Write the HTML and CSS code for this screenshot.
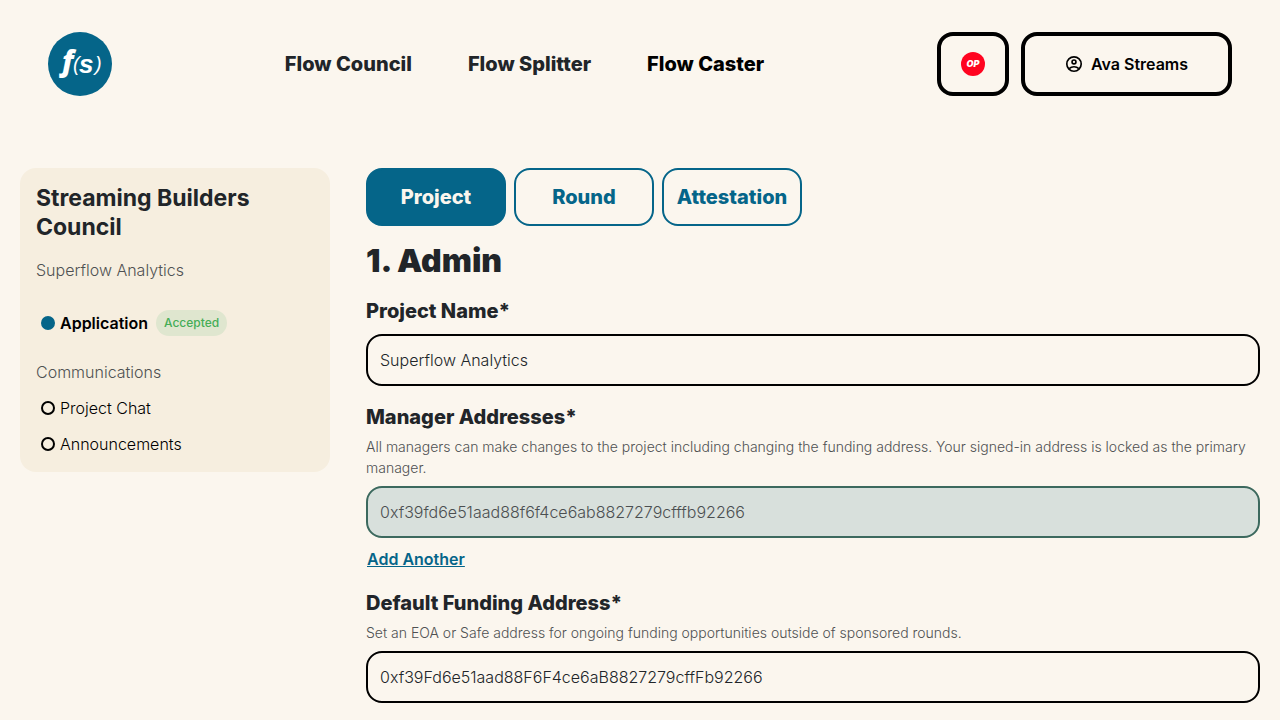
FILE: index.html
```html
<!DOCTYPE html>
<html lang="en">
  <head>
    <meta charset="UTF-8">
    <meta name="viewport" content="width=device-width, initial-scale=1">
    <title>Flow Council - Application</title>
    <link rel="stylesheet" href="styles.css">
  </head>
  <body>
    <header class="header">
      <a href="#" class="logo" aria-label="Flow State">
        <svg width="64" height="64" viewBox="0 0 64 64">
          <circle cx="32" cy="32" r="32" fill="#056589"/>
          <g fill="#fff" font-family="Liberation Sans, sans-serif" font-style="italic">
            <text x="14" y="39" font-family="Open Sans, sans-serif" font-size="28" font-weight="800">f</text>
            <text x="25" y="39" font-size="20">(</text>
            <text x="31" y="41" font-size="26" font-weight="700">s</text>
            <text x="47" y="39" font-size="20">)</text>
          </g>
        </svg>
      </a>
      <nav class="nav">
        <a href="#">Flow Council</a>
        <a href="#">Flow Splitter</a>
        <a href="#" class="active">Flow Caster</a>
      </nav>
      <div class="account">
        <button type="button" class="network-button" aria-label="Network">
          <svg width="24" height="24" viewBox="0 0 24 24">
            <circle cx="12" cy="12" r="12" fill="#ff0420"/>
            <text x="12" y="15" fill="#fff" font-family="Inter, sans-serif" font-size="9" font-weight="900" font-style="italic" text-anchor="middle">OP</text>
          </svg>
        </button>
        <button type="button" class="profile-button">
          <svg width="18" height="18" viewBox="0 0 24 24" fill="none" stroke="#000" stroke-width="2.2">
            <circle cx="12" cy="12" r="9.6"/>
            <circle cx="12" cy="9.3" r="2.6"/>
            <path d="M5.5 18.2c3.600-3.400 9.400-3.400 13 0"/>
          </svg>
          Ava Streams
        </button>
      </div>
    </header>

    <div class="page">
      <aside class="sidebar">
        <h2>Streaming Builders Council</h2>
        <p class="project">Superflow Analytics</p>
        <a href="#" class="step current"><span class="dot"></span>Application <span class="badge">Accepted</span></a>
        <p class="group">Communications</p>
        <a href="#" class="step"><span class="dot"></span>Project Chat</a>
        <a href="#" class="step"><span class="dot"></span>Announcements</a>
      </aside>

      <main class="content">
        <div class="tabs">
          <button type="button" class="tab active">Project</button>
          <button type="button" class="tab">Round</button>
          <button type="button" class="tab">Attestation</button>
        </div>

        <form>
          <h1>1. Admin</h1>

          <div class="field">
            <label for="project-name">Project Name*</label>
            <input type="text" id="project-name" value="Superflow Analytics">
          </div>

          <div class="field">
            <label for="manager-address">Manager Addresses*</label>
            <p class="hint">All managers can make changes to the project including changing the funding address. Your signed-in address is locked as the primary manager.</p>
            <input type="text" id="manager-address" value="0xf39fd6e51aad88f6f4ce6ab8827279cfffb92266" disabled>
            <button type="button" class="add-button">Add Another</button>
          </div>

          <div class="field">
            <label for="funding-address">Default Funding Address*</label>
            <p class="hint">Set an EOA or Safe address for ongoing funding opportunities outside of sponsored rounds.</p>
            <input type="text" id="funding-address" value="0xf39Fd6e51aad88F6F4ce6aB8827279cffFb92266">
          </div>
        </form>
      </main>
    </div>
  </body>
</html>
```
FILE: styles.css
```css
* {
  box-sizing: border-box;
}

body {
  margin: 0;
  background: #fbf6ee;
  color: #212529;
  font-family: Inter, sans-serif;
  font-size: 16px;
  font-weight: 300;
  line-height: 24px;
}

h1, h2, p {
  margin: 0;
}

a {
  color: inherit;
  text-decoration: none;
}

button, input {
  font: inherit;
}

button {
  cursor: pointer;
}

.header {
  display: flex;
  align-items: center;
  justify-content: space-between;
  padding: 32px 48px;
}

.logo svg {
  display: block;
}

.nav {
  display: flex;
  gap: 56px;
  font-size: 20px;
  font-weight: 800;
}

.nav .active {
  color: #000;
}

.account {
  display: flex;
  gap: 12px;
}

.account button {
  display: flex;
  align-items: center;
  justify-content: center;
  gap: 8px;
  height: 64px;
  padding: 0;
  border: 4px solid #000;
  border-radius: 16px;
  background: transparent;
  color: #000;
  font-weight: 600;
}

.account .network-button {
  width: 72px;
}

.account .profile-button {
  width: 211px;
}

.page {
  display: flex;
  align-items: flex-start;
  gap: 36px;
  padding: 40px 20px 16px;
}

.sidebar {
  flex: none;
  width: 310px;
  padding: 16px;
  border-radius: 16px;
  background: #f6eedf;
}

.sidebar h2 {
  font-size: 23px;
  font-weight: 700;
  line-height: 29px;
}

.project, .group {
  color: #4f5152;
}

.project {
  margin: 16px 0 28px;
}

.group {
  margin-top: 24px;
}

.step {
  display: flex;
  align-items: center;
  color: #000;
}

.step:not(.current) {
  margin-top: 12px;
}

.step.current {
  font-weight: 600;
}

.dot {
  width: 14px;
  height: 14px;
  margin: 0 5px;
  border: 2px solid #000;
  border-radius: 50%;
}

.current .dot {
  border-color: #056589;
  background: #056589;
}

.badge {
  margin-left: 8px;
  padding: 4px 8px;
  border-radius: 16px;
  background: #dfe6cf;
  color: #45ad57;
  font-size: 12px;
  font-weight: 500;
  line-height: 18px;
}

.content {
  flex: 1;
  min-width: 0;
}

.tabs {
  display: flex;
  gap: 8px;
}

.tab {
  width: 140px;
  height: 58px;
  padding: 0;
  border: 2px solid #056589;
  border-radius: 16px;
  background: transparent;
  color: #056589;
  font-size: 20px;
  font-weight: 800;
}

.tab.active {
  background: #056589;
  color: #fbf6ee;
}

h1 {
  margin: 16px 0;
  font-size: 32px;
  font-weight: 900;
  line-height: 38px;
}

.field {
  margin-bottom: 16px;
}

.field label {
  display: block;
  font-size: 20px;
  font-weight: 800;
  line-height: 30px;
}

.field input {
  display: block;
  width: 100%;
  height: 52px;
  margin-top: 8px;
  padding: 0 12px;
  border: 2px solid #000;
  border-radius: 16px;
  background: transparent;
  color: #212529;
}

.field input:disabled {
  border-color: #3c695e;
  background: #d8e0dc;
  color: #4b4f51;
}

.hint {
  margin-top: 4px;
  color: #4f5152;
  font-size: 14px;
  line-height: 21px;
}

.add-button {
  margin-top: 8px;
  padding: 1px;
  border: 0;
  background: none;
  color: #056589;
  font-weight: 600;
  text-decoration: underline;
}
```
